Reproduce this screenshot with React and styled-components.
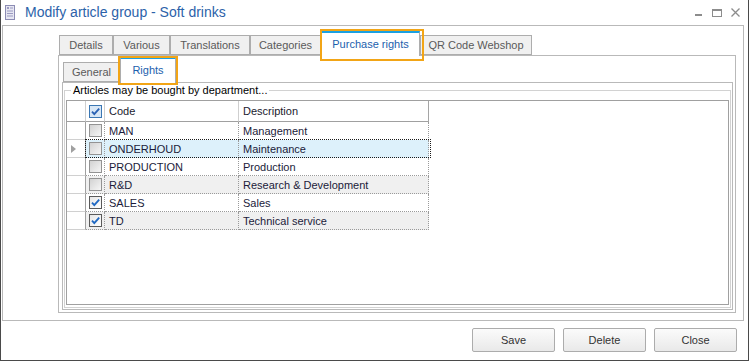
import React from "react";
import styled, { createGlobalStyle } from "styled-components";

// Dialog: Modify article group, tab "Purchase rights" / "Rights"

const GlobalStyle = createGlobalStyle`
  html, body {
    margin: 0;
    padding: 0;
    background: #fff;
  }
  * {
    box-sizing: border-box;
  }
`;

const mainTabs = [
  { label: "Details", width: 54 },
  { label: "Various", width: 57 },
  { label: "Translations", width: 80 },
  { label: "Categories", width: 71 },
  { label: "Purchase rights", width: 99, active: true },
  { label: "QR Code Webshop", width: 112 },
];

const departments = [
  { code: "MAN", description: "Management", checked: false },
  { code: "ONDERHOUD", description: "Maintenance", checked: false },
  { code: "PRODUCTION", description: "Production", checked: false },
  { code: "R&D", description: "Research & Development", checked: false },
  { code: "SALES", description: "Sales", checked: true },
  { code: "TD", description: "Technical service", checked: true },
];

const SELECTED_ROW = 1;

const DocIcon = () => (
  <svg width="10" height="15" viewBox="0 0 10 15">
    <rect x="0.5" y="0.5" width="9" height="14" fill="#e6e6f2" stroke="#8c8cb4" />
    <rect x="2" y="2" width="2" height="2" fill="#9a9ac0" />
    <path d="M5 3h3M2 6h6M2 8.5h6M2 11h6" stroke="#9a9ac0" strokeWidth="1" />
  </svg>
);

const CheckMark = ({ color }) => (
  <svg width="11" height="11" viewBox="0 0 11 11">
    <path d="M2 5.6 L4.3 8.2 L9.2 2.6" fill="none" stroke={color} strokeWidth="1.8" />
  </svg>
);

const Checkbox = ({ checked, header }) => (
  <Box $checked={checked} $header={header}>
    {checked && <CheckMark color={header ? "#2a62b4" : "#1f68c2"} />}
  </Box>
);

const App = () => {
  return (
    <>
      <GlobalStyle />
      <Window>
        <TitleBar>
          <DocIcon />
          <Title>Modify article group - Soft drinks</Title>
          <WindowControls>
            <svg width="8" height="8" viewBox="0 0 8 8">
              <rect x="0" y="5" width="7" height="2" fill="#8c8c8c" />
            </svg>
            <svg width="10" height="8" viewBox="0 0 10 8">
              <rect x="0.5" y="0.5" width="9" height="7" fill="none" stroke="#8c8c8c" />
              <rect x="0" y="0" width="10" height="2" fill="#8c8c8c" />
            </svg>
            <svg width="9" height="9" viewBox="0 0 9 9">
              <path d="M0.5 0.5 L8.5 8.5 M8.5 0.5 L0.5 8.5" stroke="#8c8c8c" strokeWidth="1.3" />
            </svg>
          </WindowControls>
        </TitleBar>

        <Frame>
          <TabStrip $pad={1}>
            {mainTabs.map((t) => (
              <Tab key={t.label} $width={t.width} $active={t.active}>
                {t.label}
                {t.active && <Highlight $inset="-4px -5px -5px -2px" />}
              </Tab>
            ))}
          </TabStrip>
          <TabPanel>
            <TabStrip $pad={1} $tall>
              <Tab $width={57}>General</Tab>
              <Tab $width={56} $active>
                Rights
                <Highlight $inset="-3px -3px -2px -3px" />
              </Tab>
            </TabStrip>
            <SubPanel>
              <GroupBox>
                <Caption>Articles may be bought by department...</Caption>
                <Grid>
                  <HeaderRow>
                    <IndicatorHead />
                    <HeadCell $center $sep="#cfcfcf">
                      <Checkbox checked header />
                    </HeadCell>
                    <HeadCell $sep="#cfcfcf">Code</HeadCell>
                    <HeadCell $sep="#a5a5a5">Description</HeadCell>
                  </HeaderRow>
                  {departments.map((d, i) => (
                    <Row key={d.code} $focused={i === SELECTED_ROW}>
                      <Indicator>
                        {i === SELECTED_ROW && (
                          <svg width="5" height="8" viewBox="0 0 5 8">
                            <polygon points="0,0 5,4 0,8" fill="#a0a0a0" />
                          </svg>
                        )}
                      </Indicator>
                      <Cell $center $alt={i % 2 === 1} $selected={i === SELECTED_ROW}>
                        <Checkbox checked={d.checked} />
                      </Cell>
                      <Cell $alt={i % 2 === 1} $selected={i === SELECTED_ROW}>
                        {d.code}
                      </Cell>
                      <Cell $alt={i % 2 === 1} $selected={i === SELECTED_ROW}>
                        {d.description}
                      </Cell>
                    </Row>
                  ))}
                </Grid>
              </GroupBox>
            </SubPanel>
          </TabPanel>
        </Frame>

        <Footer>
          <Button>Save</Button>
          <Button>Delete</Button>
          <Button>Close</Button>
        </Footer>
      </Window>
    </>
  );
};

const Window = styled.div`
  width: 749px;
  height: 361px;
  border: 1px solid #4a4a4a;
  border-top: none;
  background: #fff;
  display: flex;
  flex-direction: column;
  font-family: "Liberation Sans", Arial, sans-serif;
  font-size: 11px;
  color: #1b1b3a;
`;

const TitleBar = styled.div`
  height: 25px;
  flex-shrink: 0;
  display: flex;
  align-items: center;
  padding: 0 8px 1px 4px;
  svg {
    flex-shrink: 0;
  }
`;

const Title = styled.span`
  margin-left: 10px;
  font-size: 14px;
  color: #2c62a9;
  white-space: nowrap;
`;

const WindowControls = styled.div`
  margin-left: auto;
  display: flex;
  align-items: center;
  gap: 9px;
  padding-top: 1px;
`;

const Frame = styled.div`
  flex: 1;
  min-height: 0;
  margin: 0 4px 0 1px;
  border: 1px solid #b9b9b9;
  padding: 5px 7px 7px 55px;
  display: flex;
  flex-direction: column;
`;

const TabStrip = styled.div`
  height: ${(p) => (p.$tall ? 25 : 24)}px;
  flex-shrink: 0;
  display: flex;
  align-items: flex-end;
  padding-left: ${(p) => p.$pad}px;
`;

const Tab = styled.div`
  position: relative;
  width: ${(p) => p.$width}px;
  height: ${(p) => (p.$active ? "calc(100% + 1px)" : "20px")};
  margin-bottom: ${(p) => (p.$active ? "-1px" : "0")};
  z-index: ${(p) => (p.$active ? 2 : 0)};
  display: flex;
  align-items: center;
  justify-content: center;
  padding-bottom: ${(p) => (p.$active ? "2px" : "1px")};
  border: 1px solid #adadad;
  border-bottom: ${(p) => (p.$active ? "none" : "1px solid #adadad")};
  border-top: ${(p) => (p.$active ? "2px solid #1ba1e2" : "1px solid #adadad")};
  background: ${(p) => (p.$active ? "#fff" : "#f0f0f0")};
  color: ${(p) => (p.$active ? "#1c5fad" : "#5a5a5a")};
  white-space: nowrap;
`;

const Highlight = styled.span`
  position: absolute;
  inset: ${(p) => p.$inset};
  border: 2px solid #f2a516;
  pointer-events: none;
`;

const TabPanel = styled.div`
  position: relative;
  z-index: 1;
  flex: 1;
  min-height: 0;
  border: 1px solid #b9b9b9;
  background: #fff;
  padding: 1px 2px 2px 3px;
  display: flex;
  flex-direction: column;
`;

const SubPanel = styled.div`
  position: relative;
  z-index: 1;
  flex: 1;
  min-height: 0;
  border: 1px solid #b9b9b9;
  background: #fff;
  padding: 1px;
  display: flex;
  flex-direction: column;
`;

const GroupBox = styled.fieldset`
  flex: 1;
  min-height: 0;
  min-width: 0;
  margin: 0;
  border: 1px solid #d2d2d2;
  padding: 3px 1px 2px 1px;
  display: flex;
  flex-direction: column;
`;

const Caption = styled.legend`
  margin-left: 5px;
  padding: 0 2px;
  line-height: 13px;
  font-size: 11px;
  color: #000;
`;

const Grid = styled.div`
  flex: 1;
  min-height: 0;
  border: 1px solid #a0a0a0;
  background: #fff;
  overflow: hidden;
`;

const columns = "19px 19px 134px 190px";

const HeaderRow = styled.div`
  display: grid;
  grid-template-columns: ${columns};
  height: 21px;
`;

const IndicatorHead = styled.div`
  border-right: 1px solid #cfcfcf;
  border-bottom: 1px solid #a0a0a0;
`;

const HeadCell = styled.div`
  display: flex;
  align-items: center;
  justify-content: ${(p) => (p.$center ? "center" : "flex-start")};
  padding-left: ${(p) => (p.$center ? 0 : 4)}px;
  border-right: 1px solid ${(p) => p.$sep};
  border-bottom: 1px solid #a0a0a0;
  color: #1a1a2e;
`;

const Row = styled.div`
  position: relative;
  display: grid;
  grid-template-columns: ${columns};
  height: 18px;
  ${(p) =>
    p.$focused &&
    `
    &::after {
      content: "";
      position: absolute;
      left: 18px;
      top: -1px;
      width: 344px;
      bottom: 0;
      border: 1px dotted #1a1a1a;
      pointer-events: none;
    }
  `}
`;

const Indicator = styled.div`
  display: flex;
  align-items: center;
  padding-left: 4px;
  border-right: 1px solid #a0a0a0;
  border-bottom: 1px solid #d0d0d0;
  background: #fff;
`;

const Cell = styled.div`
  display: flex;
  align-items: center;
  justify-content: ${(p) => (p.$center ? "center" : "flex-start")};
  padding-left: ${(p) => (p.$center ? 0 : 4)}px;
  border-right: 1px dotted #9a9a9a;
  border-bottom: 1px dotted #9a9a9a;
  background: ${(p) => (p.$selected ? "#ddf1fb" : p.$alt ? "#f0f0f0" : "#fff")};
  white-space: nowrap;
`;

const Box = styled.span`
  width: 13px;
  height: 13px;
  display: flex;
  align-items: center;
  justify-content: center;
  border: 1px solid
    ${(p) => (p.$header ? "#3b77b3" : p.$checked ? "#5a5a5a" : "#939393")};
  background: ${(p) =>
    p.$header
      ? "#d8e7f6"
      : p.$checked
      ? "linear-gradient(135deg, #e6e6e6, #ffffff)"
      : "linear-gradient(135deg, #d2d2d2, #f6f6f6)"};
`;

const Footer = styled.div`
  height: 39px;
  flex-shrink: 0;
  display: flex;
  justify-content: flex-end;
  align-items: flex-start;
  gap: 8px;
  padding: 7px 11px 0 0;
`;

const Button = styled.button`
  width: 83px;
  height: 24px;
  border: 1px solid #acacac;
  border-radius: 2px;
  background: linear-gradient(#fbfbfb, #e9e9e9);
  font-family: "Liberation Sans", Arial, sans-serif;
  font-size: 11px;
  color: #333;
  padding: 0;
`;

export default App;
